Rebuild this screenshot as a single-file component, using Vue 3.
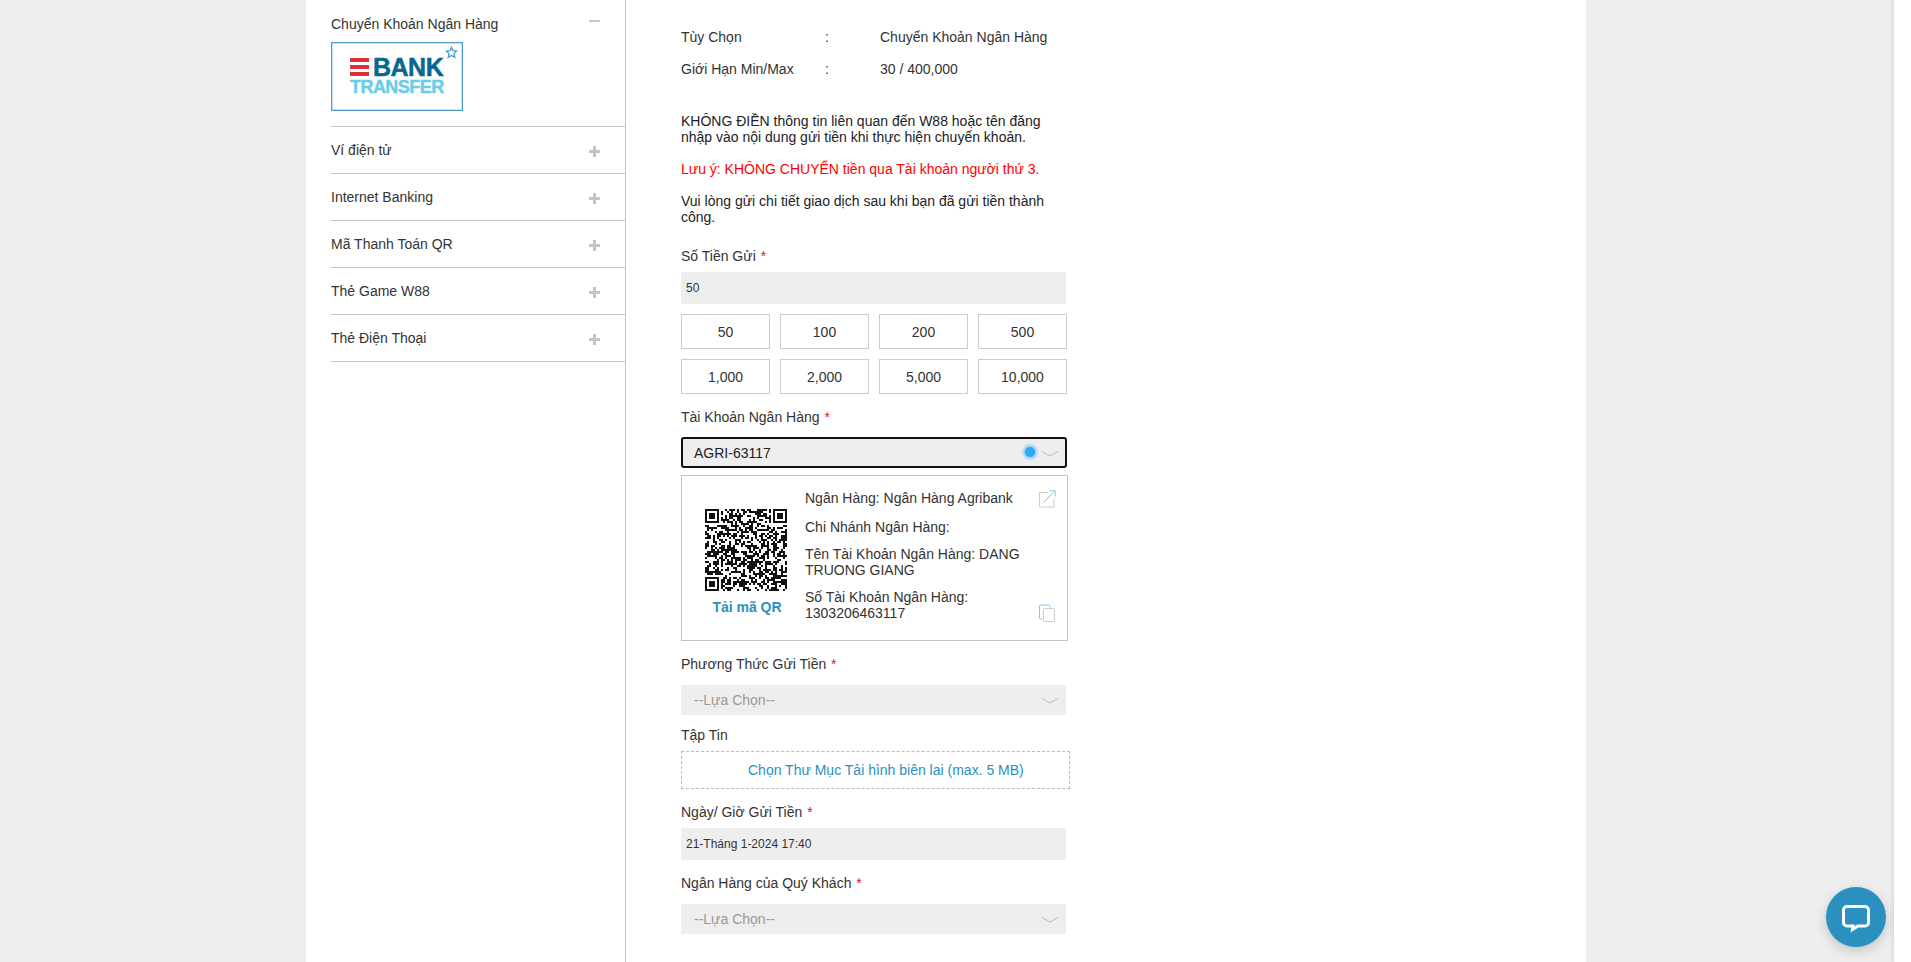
<script setup>
const methods = ['Ví điện tử', 'Internet Banking', 'Mã Thanh Toán QR', 'Thẻ Game W88', 'Thẻ Điện Thoại']
const amounts = ['50', '100', '200', '500', '1,000', '2,000', '5,000', '10,000']

// fake qr pattern, 41 modules with the three finder squares
const size = 41
function inFinder(x, y) {
  return (x < 8 && y < 8) || (x > size - 9 && y < 8) || (x < 8 && y > size - 9)
}
let seed = 88
function rand() {
  seed = (seed * 1103515245 + 12345) & 0x7fffffff
  return (seed >> 12) % 100
}
let qrPath = ''
for (let y = 0; y < size; y++) {
  for (let x = 0; x < size; x++) {
    if (!inFinder(x, y) && rand() < 52) qrPath += `M${x} ${y}h1v1h-1z`
  }
}
for (const [fx, fy] of [[0, 0], [size - 7, 0], [0, size - 7]]) {
  qrPath += `M${fx} ${fy}h7v7h-7zM${fx + 1} ${fy + 1}v5h5v-5zM${fx + 2} ${fy + 2}h3v3h-3z`
}
</script>

<template>
  <div class="page">
    <main class="container">
      <aside class="sidebar">
        <section class="method open">
          <div class="method-head">
            <span>Chuyển Khoản Ngân Hàng</span>
            <i class="minus" />
          </div>
          <div class="logo">
            <svg class="star" viewBox="0 0 24 24">
              <path d="M12 2.5l2.9 6.2 6.7.8-5 4.6 1.4 6.7-6-3.4-6 3.4 1.4-6.7-5-4.6 6.7-.8z" />
            </svg>
            <div class="logo-top">
              <div class="stripes"><b /><b /><b /></div>
              <span class="bank">BANK</span>
            </div>
            <div class="transfer">TRANSFER</div>
          </div>
        </section>
        <section v-for="m in methods" :key="m" class="method">
          <div class="method-head">
            <span>{{ m }}</span>
            <i class="plus" />
          </div>
        </section>
      </aside>

      <div class="content">
        <div class="info-row"><span class="k">Tùy Chọn</span><span class="c">:</span><span>Chuyển Khoản Ngân Hàng</span></div>
        <div class="info-row"><span class="k">Giới Hạn Min/Max</span><span class="c">:</span><span>30 / 400,000</span></div>

        <div class="notes">
          <p>KHÔNG ĐIỀN thông tin liên quan đến W88 hoặc tên đăng nhập vào nội dung gửi tiền khi thực hiện chuyển khoản.</p>
          <p class="red">Lưu ý: KHÔNG CHUYỂN tiền qua Tài khoản người thứ 3.</p>
          <p>Vui lòng gửi chi tiết giao dịch sau khi bạn đã gửi tiền thành công.</p>
        </div>

        <label class="lbl first">Số Tiền Gửi <em>*</em></label>
        <div class="input">50</div>
        <div class="amounts">
          <button v-for="a in amounts" :key="a" type="button">{{ a }}</button>
        </div>

        <label class="lbl bank-lbl">Tài Khoản Ngân Hàng <em>*</em></label>
        <div class="select focused">
          <span>AGRI-63117</span>
          <i class="dot" />
          <svg class="chev" viewBox="0 0 18 6"><path d="M1 .5l8 4.5 8-4.5" /></svg>
        </div>

        <div class="bank-card">
          <div class="qr-col">
            <svg class="qr" viewBox="0 0 41 41" shape-rendering="crispEdges"><path :d="qrPath" fill-rule="evenodd" /></svg>
            <a class="qr-link">Tải mã QR</a>
          </div>
          <div class="bank-info">
            <p class="l1">Ngân Hàng: Ngân Hàng Agribank</p>
            <p class="l2">Chi Nhánh Ngân Hàng:</p>
            <p class="l3">Tên Tài Khoản Ngân Hàng: DANG TRUONG GIANG</p>
            <p class="l4">Số Tài Khoản Ngân Hàng: 1303206463117</p>
          </div>
          <div class="bank-icons">
            <svg viewBox="0 0 18 18" class="ic">
              <path class="g" d="M10 2.5H1.5v14.500h14.500V8.500" />
              <path class="b" d="M5.500 12.500L17 1M11.500 .8h5.700v5.700" />
            </svg>
            <svg viewBox="0 0 18 18" class="ic">
              <path class="b" d="M4 15H2.500a1 1 0 0 1-1-1V2a1 1 0 0 1 1-1H11a1 1 0 0 1 1 1v1.500" />
              <rect class="g" x="5.500" y="4.500" width="11" height="13" rx="1" />
            </svg>
          </div>
        </div>

        <label class="lbl method-lbl">Phương Thức Gửi Tiền <em>*</em></label>
        <div class="select muted">
          <span>--Lựa Chọn--</span>
          <svg class="chev" viewBox="0 0 18 6"><path d="M1 .5l8 4.500 8-4.500" /></svg>
        </div>

        <label class="lbl file-lbl">Tập Tin</label>
        <div class="upload">Chọn Thư Mục Tải hình biên lai (max. 5 MB)</div>

        <label class="lbl date-lbl">Ngày/ Giờ Gửi Tiền <em>*</em></label>
        <div class="input">21-Tháng 1-2024 17:40</div>

        <label class="lbl own-lbl">Ngân Hàng của Quý Khách <em>*</em></label>
        <div class="select muted">
          <span>--Lựa Chọn--</span>
          <svg class="chev" viewBox="0 0 18 6"><path d="M1 .5l8 4.500 8-4.500" /></svg>
        </div>
      </div>
    </main>

    <button class="chat" type="button" aria-label="chat">
      <svg viewBox="0 0 32 32">
        <path d="M7 5.500h18a3.500 3.500 0 0 1 3.500 3.500v12.500a3.500 3.500 0 0 1-3.500 3.500h-7l-5.500 3.500.5-3.500H7a3.500 3.500 0 0 1-3.500-3.500V9A3.500 3.500 0 0 1 7 5.500z" />
      </svg>
    </button>
    <div class="scrollbar" />
  </div>
</template>

<style>
html,
body {
  margin: 0;
  height: 100%;
  overflow: hidden;
  background: #eee;
}
</style>

<style scoped>
.page {
  position: relative;
  height: 962px;
  overflow: hidden;
  background: #eee;
  font-family: "Liberation Sans", Arial, sans-serif;
  font-size: 14px;
  color: #333;
}

.container {
  display: flex;
  width: 1280px;
  height: 962px;
  margin-left: 306px;
  background: #fff;
}

.sidebar {
  box-sizing: border-box;
  width: 320px;
  padding-left: 25px;
  border-right: 1px solid #c6c6c6;
}

.method {
  box-sizing: border-box;
  height: 47px;
  border-bottom: 1px solid #c6c6c6;
}

.method.open {
  height: 127px;
}

.method-head {
  display: flex;
  align-items: center;
  justify-content: space-between;
  height: 46px;
  padding-right: 25px;
}

.method.open .method-head {
  height: 16px;
  padding-top: 16px;
  padding-bottom: 10px;
}

.plus,
.minus {
  position: relative;
  display: block;
  width: 11px;
  height: 11px;
}

.plus {
  top: 1px;
}

.plus::before,
.minus::before {
  content: '';
  position: absolute;
  left: 0;
  top: 4px;
  width: 11px;
  height: 3px;
  background: #c4c4c4;
}

.plus::after {
  content: '';
  position: absolute;
  left: 4px;
  top: 0;
  width: 3px;
  height: 11px;
  background: #c4c4c4;
}

.minus {
  top: -3px;
}

.minus::before {
  height: 2px;
  background: #c8c8c8;
}

.logo {
  position: relative;
  box-sizing: border-box;
  width: 132px;
  height: 69px;
  padding: 15px 0 0 18px;
  border: 1px solid #4f9fca;
  box-shadow: inset 0 0 0 1px #c4e0ef;
  background: #fff;
}

.star {
  position: absolute;
  right: 4px;
  top: 3px;
  width: 13px;
  height: 13px;
  fill: none;
  stroke: #3f9ccb;
  stroke-width: 2.4;
}

.logo-top {
  display: flex;
  align-items: center;
  gap: 4px;
  height: 18px;
}

.stripes {
  display: flex;
  flex-direction: column;
  gap: 3px;
  width: 19px;
}

.stripes b {
  display: block;
  height: 4px;
  background: #dc3237;
}

.bank {
  font-size: 25px;
  font-weight: 700;
  line-height: 18px;
  letter-spacing: -.5px;
  color: #05688c;
  -webkit-text-stroke: .5px #05688c;
}

.transfer {
  margin-top: 5px;
  font-size: 18px;
  font-weight: 700;
  line-height: 13px;
  letter-spacing: -.55px;
  color: #69cde9;
  -webkit-text-stroke: .4px #69cde9;
}

.content {
  width: 390px;
  margin-left: 55px;
  padding-top: 29px;
  line-height: 16px;
}

.info-row {
  display: flex;
  height: 16px;
  margin-bottom: 16px;
}

.k {
  width: 144px;
}

.c {
  width: 55px;
}

.notes {
  width: 385px;
  margin-top: 36px;
}

.notes p {
  margin: 0 0 16px;
  color: #222;
}

.notes p.red {
  color: #f00;
}

.lbl {
  display: block;
  height: 16px;
}

.lbl em {
  margin-left: 1px;
  font-style: normal;
  color: #e0103a;
}

.lbl.first {
  margin-top: 23px;
  margin-bottom: 8px;
}

.input {
  box-sizing: border-box;
  width: 385px;
  height: 32px;
  padding-left: 5px;
  font-size: 12px;
  line-height: 32px;
  background: #eee;
}

.amounts {
  display: grid;
  grid-template-columns: repeat(4, 89px);
  gap: 10px;
  margin-top: 10px;
}

.amounts button {
  height: 35px;
  padding: 0;
  border: 1px solid #ccc;
  background: #fff;
  font: inherit;
  color: #333;
}

.bank-lbl {
  margin-top: 15px;
  margin-bottom: 12px;
}

.select {
  position: relative;
  box-sizing: border-box;
  display: flex;
  align-items: center;
  width: 385px;
  height: 30px;
  padding-left: 13px;
  background: #eee;
}

.select.focused {
  width: 386px;
  height: 31px;
  padding-left: 11px;
  border: 2px solid #111;
  border-radius: 3px;
  color: #222;
}

.select.muted {
  color: #999;
}

.chev {
  position: absolute;
  right: 7px;
  top: 50%;
  width: 18px;
  height: 6px;
  margin-top: -2px;
  fill: none;
  stroke: #bbb;
}

.focused .chev {
  right: 6px;
}

.dot {
  position: absolute;
  right: 30px;
  top: 8px;
  width: 10px;
  height: 10px;
  border-radius: 50%;
  background: #2fa7f5;
  box-shadow: 0 0 3px 2px #7fcdfb;
}

.bank-card {
  box-sizing: border-box;
  display: flex;
  width: 387px;
  height: 166px;
  margin-top: 7px;
  border: 1px solid #c4c4c4;
}

.qr-col {
  width: 123px;
  padding: 33px 0 0 23px;
  box-sizing: border-box;
}

.qr {
  display: block;
  width: 82px;
  height: 82px;
}

.qr path {
  fill: #111;
}

.qr-link {
  display: block;
  width: 84px;
  margin-top: 8px;
  font-weight: 700;
  text-align: center;
  color: #2d8fc0;
}

.bank-info {
  width: 224px;
  color: #333;
}

.bank-info p {
  margin: 0;
}

.l1 {
  padding-top: 14px;
}

.l2 {
  padding-top: 13px;
}

.l3 {
  padding-top: 11px;
}

.l4 {
  padding-top: 11px;
}

.bank-icons {
  display: flex;
  flex-direction: column;
  justify-content: space-between;
  padding: 14px 0 18px 9px;
}

.ic {
  display: block;
  width: 18px;
  height: 18px;
  fill: none;
}

.ic .g {
  stroke: #ccc;
}

.ic .b {
  stroke: #8cc8e6;
}

.method-lbl {
  margin-top: 15px;
  margin-bottom: 13px;
}

.file-lbl {
  margin-top: 12px;
  margin-bottom: 8px;
}

.upload {
  box-sizing: border-box;
  width: 389px;
  height: 38px;
  padding-left: 66px;
  border: 1px dashed #bbb;
  line-height: 36px;
  color: #2d8fc0;
}

.date-lbl {
  margin-top: 15px;
  margin-bottom: 8px;
}

.own-lbl {
  margin-top: 15px;
  margin-bottom: 13px;
}

.chat {
  position: absolute;
  left: 1826px;
  top: 887px;
  width: 60px;
  height: 60px;
  padding: 14px;
  border: 0;
  border-radius: 50%;
  background: #2a90c0;
  box-shadow: 0 4px 12px rgba(0, 0, 0, .18);
}

.chat svg {
  display: block;
  width: 32px;
  height: 32px;
  fill: none;
  stroke: #fff;
  stroke-width: 3;
}

.scrollbar {
  position: absolute;
  right: 0;
  top: 0;
  bottom: 0;
  width: 17px;
  background: #fff;
  box-shadow: -1px 0 4px rgba(0, 0, 0, .12);
}
</style>
